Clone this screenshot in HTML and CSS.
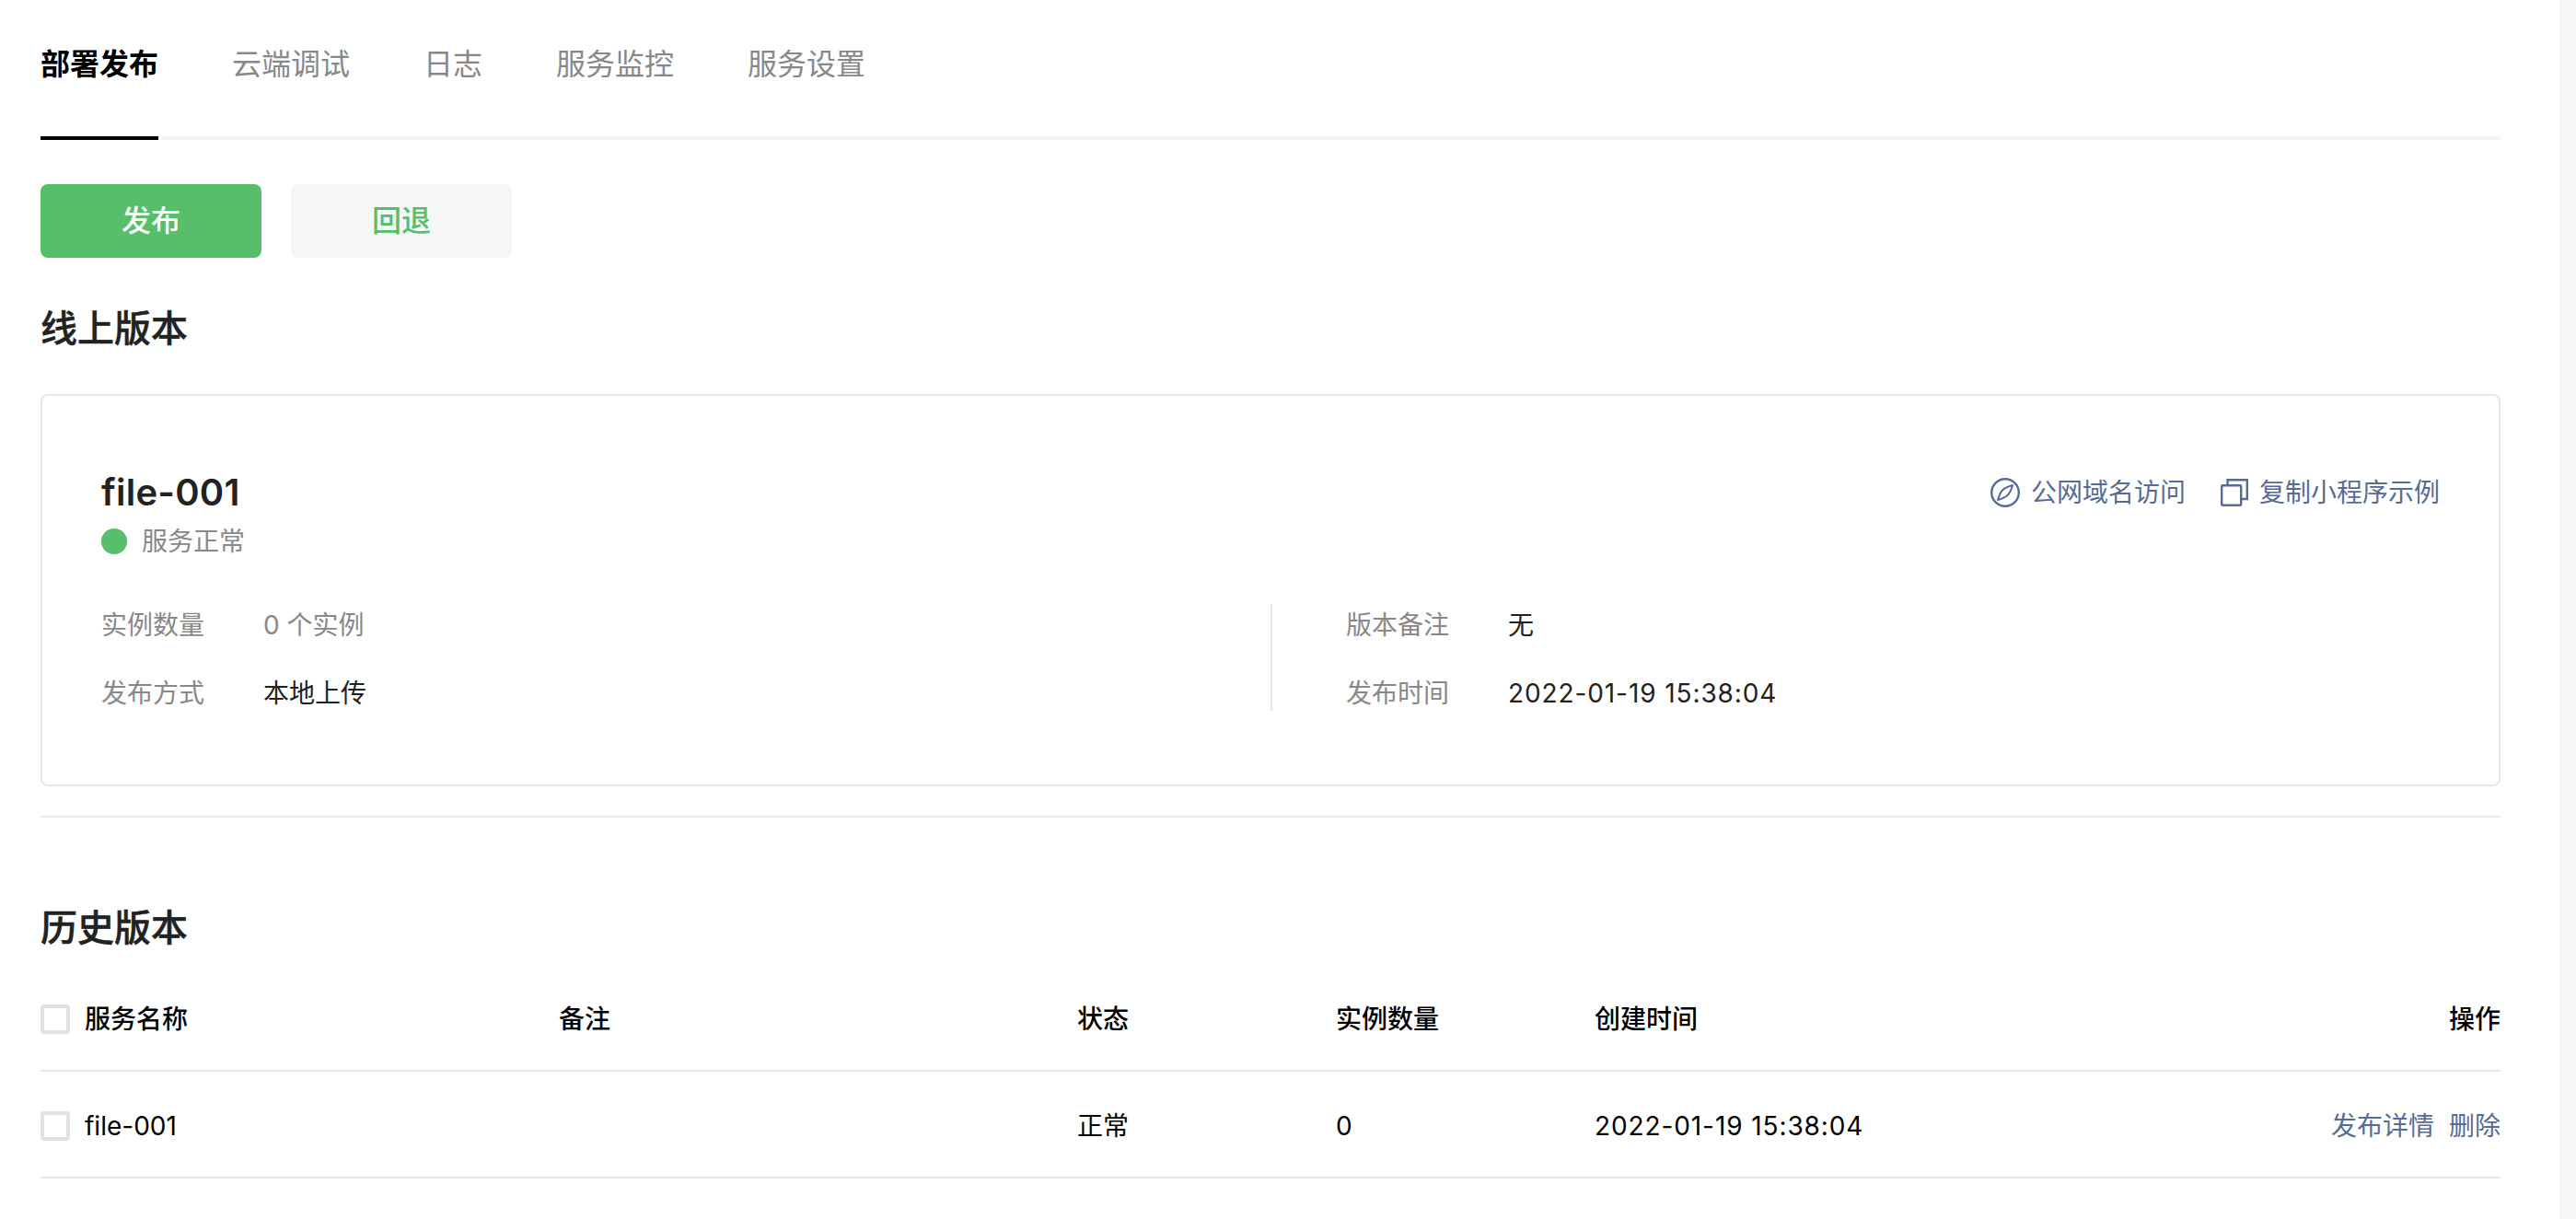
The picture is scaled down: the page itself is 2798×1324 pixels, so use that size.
FILE: index.html
```html
<!DOCTYPE html>
<html lang="zh-CN">
<head>
<meta charset="utf-8">
<title>部署发布</title>
<link rel="stylesheet" href="styles.css">
</head>
<body>
<main class="main">
  <nav class="tabs">
    <a class="tab tab-active">部署发布</a>
    <a class="tab">云端调试</a>
    <a class="tab">日志</a>
    <a class="tab">服务监控</a>
    <a class="tab">服务设置</a>
  </nav>
  <div class="actions">
    <button class="btn btn-primary">发布</button>
    <button class="btn btn-default">回退</button>
  </div>
  <h2 class="section-title section-online">线上版本</h2>
  <section class="card">
    <div class="card-head">
      <div>
        <div class="service-name">file-001</div>
        <div class="status"><span class="dot"></span>服务正常</div>
      </div>
      <div class="links">
        <a class="link">
          <svg class="icon-compass" viewBox="0 0 32 32" width="32" height="32" fill="none" stroke="#576b95" stroke-width="2.4">
            <circle cx="16" cy="16" r="14.8"/>
            <path stroke-width="2" stroke-linejoin="round" d="M24 8C22.5 13.5 20.5 17 18.8 18.8C17 20.5 13.5 22.5 8 24C9.5 18.5 11.5 15 13.2 13.2C15 11.5 18.5 9.5 24 8Z"/>
          </svg>
          公网域名访问
        </a>
        <a class="link">
          <svg class="icon-copy" viewBox="0 0 30 30" width="30" height="30" fill="none" stroke="#576b95" stroke-width="2.4">
            <rect x="1.2" y="7.2" width="21" height="21.6" rx="1"/>
            <path d="M7.5 7V1.2H28.8V22H22.4"/>
          </svg>
          复制小程序示例
        </a>
      </div>
    </div>
    <div class="info">
      <div class="info-col">
        <div class="info-row"><span class="info-label">实例数量</span><span class="info-muted">0 个实例</span></div>
        <div class="info-row"><span class="info-label">发布方式</span><span>本地上传</span></div>
      </div>
      <div class="info-col info-col-right">
        <div class="info-row"><span class="info-label">版本备注</span><span>无</span></div>
        <div class="info-row"><span class="info-label">发布时间</span><span class="date">2022-01-19 15:38:04</span></div>
      </div>
    </div>
  </section>
  <hr class="divider">
  <h2 class="section-title section-history">历史版本</h2>
  <div class="table">
    <div class="table-row table-header">
      <div class="cell-name"><span class="checkbox"></span>服务名称</div>
      <div>备注</div>
      <div>状态</div>
      <div>实例数量</div>
      <div>创建时间</div>
      <div class="cell-ops">操作</div>
    </div>
    <div class="table-row table-body">
      <div class="cell-name"><span class="checkbox"></span>file-001</div>
      <div></div>
      <div>正常</div>
      <div>0</div>
      <div class="date">2022-01-19 15:38:04</div>
      <div class="cell-ops"><a class="op">发布详情</a><a class="op">删除</a></div>
    </div>
  </div>
</main>
<aside class="side-strip"></aside>
</body>
</html>
```
FILE: styles.css
```css
* { box-sizing: border-box; }
html, body { height: 100%; }
body {
  margin: 0;
  display: flex;
  overflow: hidden;
  background: #fff;
  color: #222;
  font-family: "Inter", "Noto Sans CJK SC", sans-serif;
  font-size: 28px;
  line-height: 42px;
}
.main { flex: 1; min-width: 0; padding: 0 64px 0 44px; }
.side-strip { width: 18px; background: #f5f6f8; }

.tabs { display: flex; gap: 80px; height: 152px; border-bottom: 4px solid #f5f5f5; }
.tab {
  height: 152px;
  padding-top: 48px;
  font-size: 32px;
  line-height: 44px;
  color: #888;
}
.tab-active { color: #000; font-weight: 700; border-bottom: 4px solid #000; }

.actions { display: flex; gap: 32px; margin-top: 48px; }
.btn {
  width: 240px;
  height: 80px;
  border: 0;
  border-radius: 8px;
  font: inherit;
  font-size: 32px;
  font-weight: 500;
}
.btn-primary { background: #57be6a; color: #fff; }
.btn-default { background: #f5f6f8; color: #57be6a; }

.section-title {
  margin: 0;
  font-size: 40px;
  line-height: 56px;
  font-weight: 500;
  color: #222;
  -webkit-text-stroke: 0.5px #222;
}
.section-online { margin-top: 49px; }
.section-history { margin-top: 92px; }

.card {
  height: 426px;
  margin-top: 43px;
  padding: 75px 64px 0;
  border: 2px solid #e5e5e5;
  border-radius: 8px;
}
.card-head { display: flex; justify-content: space-between; align-items: flex-start; height: 151px; }
.service-name { padding-top: 2px; font-size: 40px; line-height: 56px; font-weight: 600; letter-spacing: 0.25px; color: #222; }
.status { display: flex; align-items: center; gap: 16px; margin-top: 5px; line-height: 40px; color: #888; }
.dot { width: 28px; height: 28px; border-radius: 50%; background: #57be6a; }
.links { display: flex; gap: 38px; padding-top: 9px; }
.link { display: flex; align-items: center; gap: 12px; color: #576b95; }

.info { display: grid; grid-template-columns: 1fr 1fr; }
.info-col { display: flex; flex-direction: column; gap: 32px; }
.info-col-right { padding-left: 80px; border-left: 2px solid #e5e5e5; }
.info-row { display: flex; height: 42px; line-height: 46px; }
.info-label { width: 176px; color: #888; }
.info-muted { color: #888; }
.date { letter-spacing: 0.9px; }

.divider { height: 2px; margin: 32px 0 0; border: 0; background: #eaeaea; }

.table { margin-top: 12px; }
.table-row {
  display: grid;
  grid-template-columns: 563px 563px 281px 281px 1fr auto;
  align-items: center;
  height: 116px;
  padding-top: 3px;
  border-bottom: 2px solid #e5e5e5;
  color: #000;
}
.table-header { font-weight: 500; }
.cell-name { display: flex; align-items: center; gap: 16px; }
.checkbox { width: 32px; height: 32px; border: 4px solid #e2e2e2; border-radius: 4px; }
.cell-ops { display: flex; justify-content: flex-end; gap: 16px; grid-column: 6; }
.op { color: #576b95; }
```
